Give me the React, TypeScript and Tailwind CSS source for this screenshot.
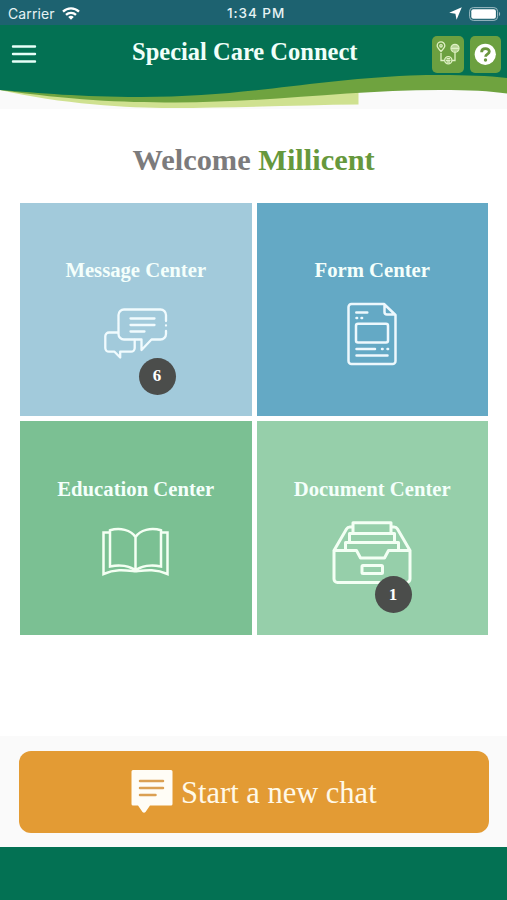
import type { ReactNode } from 'react';

function StatusBar() {
  return (
    <div className="relative flex h-[25px] items-center justify-between bg-[#1d6270] pl-2 pr-[6px] font-['Inter','Liberation_Sans',sans-serif] text-[14px] text-[#e6f2f4]">
      <div className="flex items-center gap-[7px] pt-[2px]">
        <span className="text-[14px] leading-none tracking-[0.1px]">Carrier</span>
        <svg width="18" height="13" viewBox="0 0 18 13" fill="none" stroke="#fff" strokeWidth="2.3">
          <path d="M1 4.6a11.5 11.5 0 0 1 16 0" />
          <path d="M4 7.8a7.2 7.2 0 0 1 10 0" />
          <path d="M6.2 10 9 12.8l2.8-2.8a4 4 0 0 0-5.6 0Z" fill="#fff" stroke="none" />
        </svg>
      </div>
      <span className="absolute left-[227px] top-[7px] text-[13.5px] font-medium leading-none tracking-[0.95px]">1:34 PM</span>
      <div className="flex items-center gap-[7px] pt-[2px]">
        <svg width="13" height="13" viewBox="0 0 12 12" fill="#fff">
          <path d="M11.8.2 7 11.8 5.900 6.300.2 5.200Z" />
        </svg>
        <svg width="32" height="14" viewBox="0 0 32 14" fill="none">
          <rect x=".6" y=".6" width="28" height="12.8" rx="3.7" stroke="#9dbbc3" strokeWidth="1" />
          <rect x="2.3" y="2.3" width="24.6" height="9.4" rx="2" fill="#fff" />
          <path d="M30 4.8v4.4c1.6-.7 1.6-3.7 0-4.4Z" fill="#9dbbc3" />
        </svg>
      </div>
    </div>
  );
}

function Header() {
  return (
    <header className="relative h-[85px]">
      <svg className="absolute inset-0" width="507" height="85" viewBox="0 25 507 85">
        <rect y="25" width="507" height="85" fill="#fff" />
        <path d="M0 90H507V109H0Z" fill="#fafafa" />
        <path d="M0 90C60 104 130 108 170 108C240 108 300 105 358.5 104.5V88H0Z" fill="#cfe190" />
        <path d="M0 88L0 90C70 100 120 102.5 175 102.5C275 102 350 90 440 90C470 90 490 91 507 93.5V60H0Z" fill="#6fa33f" />
        <path d="M0 25H507V78C480 75 445 74.5 410 75.5C310 80 245 97 140 97C80 97 40 93 0 90Z" fill="#037153" />
      </svg>
      <div className="relative flex h-[53px] items-center">
        <button className="ml-[11px] w-[26px] pt-[4px]" aria-label="Menu">
          <svg width="26" height="20" viewBox="0 0 26 20" stroke="#e6fff8" strokeWidth="2.4" strokeLinecap="round">
            <path d="M2 2.500h22M2 10h22M2 17.500h22" />
          </svg>
        </button>
        <h1 className="ml-[95px] whitespace-nowrap pt-[2px] text-[24.5px] font-bold leading-none text-[#f0fffa]">Special Care Connect</h1>
        <div className="ml-auto mr-[6px] flex gap-[6px] pt-[5px]">
          <button className="h-[37px] w-[32px] rounded-[5px] bg-[#6ca040]" aria-label="Journey">
            <svg width="32" height="37" viewBox="0 0 32 37" fill="none" stroke="#dff0c4" strokeWidth="1.3">
              <path d="M9 15.5C6.200 12.5 5.2 11.3 5.2 9.700a3.800 3.800 0 0 1 7.600 0c0 1.600-1 2.800-3.800 5.800Z" />
              <circle cx="9" cy="9.8" r="1.2" />
              <circle cx="23" cy="12.3" r="4" />
              <path d="M19 12.3h8M23 8.3v8M21 9v6.6M25 9v6.600M9 17v7.5h3.5M23 17v7.500h-3" />
              <circle cx="16.3" cy="24.3" r="3.6" />
              <path d="M14 24.3h4.6M14.5 22.7h3.6M14.5 26h3.6" />
            </svg>
          </button>
          <button className="h-[37px] w-[31px] rounded-[5px] bg-[#6ca040]" aria-label="Help">
            <svg width="31" height="37" viewBox="0 0 31 37" fill="none">
              <circle cx="15.3" cy="18.3" r="10.6" fill="#fff" />
              <path d="M11.6 16.2c0-4.900 7.700-4.600 7.700-.6 0 2.700-3.700 2.500-3.700 5.200" stroke="#6b963f" strokeWidth="2.8" />
              <circle cx="15.5" cy="24" r="1.7" fill="#6b963f" />
            </svg>
          </button>
        </div>
      </div>
    </header>
  );
}

function MessageIcon() {
  return (
    <svg width="64" height="52" viewBox="0 0 64 52" fill="none" stroke="#f1fbfe" strokeWidth="2.3" strokeLinejoin="round" strokeLinecap="round">
      <path d="M62 13V7a5.500 5.500 0 0 0-5.500-5.500H20A5.500 5.500 0 0 0 14.500 7v19A5.500 5.500 0 0 0 20 31.500h17.500V42l10-10.500h9a5.500 5.500 0 0 0 5.500-5.500v-3M62 17.500v.1" />
      <path d="M14 24.500H5A3.700 3.700 0 0 0 1.300 28v12A3.700 3.700 0 0 0 5 43.700h5.500l5.700 5.800v-5.800H27a3.700 3.700 0 0 0 3.700-3.700v-8" />
      <path d="M26.500 10.500h24M26.500 17h24M26.500 23.500h14" />
    </svg>
  );
}

function FormIcon() {
  return (
    <svg width="50" height="64" viewBox="0 0 50 64" fill="none" stroke="#edf8fd" strokeWidth="2.5" strokeLinejoin="round" strokeLinecap="round">
      <path d="M37 2H4.500A3 3 0 0 0 1.500 5v54a3 3 0 0 0 3 3H45.500a3 3 0 0 0 3-3V13L37 2ZM37.500 3v7a2.500 2.500 0 0 0 2.500 2.500h8" />
      <path d="M9.300 10.500h11M9.500 16h.6M14.500 16h.6M9.500 47h18.500M35 47h.6M40.500 47h.6M9.500 53.500h31" />
      <rect x="9" y="21.8" width="32" height="18.8" rx="2" />
    </svg>
  );
}

function BookIcon() {
  return (
    <svg width="67" height="49" viewBox="0 0 67 49" fill="none" stroke="#f4fff3" strokeWidth="2.5">
      <path d="M33.500 10C29 3 18 .2 8 3.300V39.500C18 37.500 28 39 33.500 43.500C39 39 49 37.500 59 39.500V3.300C49 .2 38 3 33.500 10ZV43.500" />
      <path d="M8 5.500H1.500V47C14 41.500 24 43.300 33.500 44.300C43 43.300 53 41.500 65.500 47V5.500H59" />
    </svg>
  );
}

function DocumentIcon() {
  return (
    <svg width="80" height="65" viewBox="0 0 80 65" fill="none" stroke="#f3fff4" strokeWidth="3" strokeLinejoin="round" strokeLinecap="round">
      <path d="M2 30.500H24.500L28.500 38H52.500L56.500 30.500H78V59A3.500 3.500 0 0 1 74.500 62.500H5.500A3.500 3.500 0 0 1 2 59ZM2 30.500 14.500 9A4 4 0 0 1 18 7h2.500M78 30.500 65.500 9A4 4 0 0 0 62 7h-2.500" />
      <path d="M21 13V2.800H59V13M17.500 22V13.500H62.500V22M13.500 29.500V22.500H66.500V29.500" />
      <rect x="30" y="45.500" width="20.5" height="8" rx="1" />
    </svg>
  );
}

function Tile({ title, color, children, badge, badgeClass = '' }: {
  title: string; color: string; children: ReactNode; badge?: number; badgeClass?: string;
}) {
  return (
    <button className={`relative flex flex-col items-center ${color}`}>
      <span className="whitespace-nowrap text-[20.7px] font-bold leading-[24px] text-[#f4fffb]">{title}</span>
      {children}
      {badge && (
        <span className={`absolute flex size-[37px] items-center justify-center rounded-full bg-[#4b4d4b] text-[17px] font-bold text-white ${badgeClass}`}>{badge}</span>
      )}
    </button>
  );
}

export default function App() {
  return (
    <div className="flex h-[900px] w-[507px] flex-col overflow-hidden bg-white font-['Liberation_Serif',serif]">
      <StatusBar />
      <Header />
      <main className="flex-1 px-[20px]">
        <h2 className="ml-[112.5px] mt-[33px] whitespace-nowrap text-[30.4px] font-bold leading-[34px] text-[#7c7b7c]">
          Welcome <span className="text-[#66983c]">Millicent</span>
        </h2>
        <div className="mt-[25.5px] grid w-[468px] grid-cols-[231.5px_231.5px] grid-rows-[213.5px_213.5px] gap-[5px]">
          <Tile title="Message Center" color="bg-[#a2cadb] pt-[55px]" badge={6} badgeClass="left-[118.5px] top-[155px]">
            <div className="mt-[26px]"><MessageIcon /></div>
          </Tile>
          <Tile title="Form Center" color="bg-[#64a9c5] pt-[55px]">
            <div className="mt-[20px]"><FormIcon /></div>
          </Tile>
          <Tile title="Education Center" color="bg-[#7bc093] pt-[56px]">
            <div className="mt-[26px]"><BookIcon /></div>
          </Tile>
          <Tile title="Document Center" color="bg-[#96cfaa] pt-[56px]" badge={1} badgeClass="left-[118px] top-[155px]">
            <div className="mt-[19px]"><DocumentIcon /></div>
          </Tile>
        </div>
      </main>
      <div className="h-[111px] bg-[#fafafa] pl-[19px] pt-[15px]">
        <button className="flex h-[82px] w-[470px] items-center rounded-[12px] bg-[#e39b34] pl-[112px] text-[30.5px] text-[#fff9e8]">
          <svg className="-mt-[3px]" width="42" height="44" viewBox="0 0 42 44">
            <path d="M2 1h38a1.500 1.500 0 0 1 1.500 1.500V35a1.500 1.500 0 0 1-1.500 1.500H19L14.500 43q-1.500 1.500-3 0L7 36.500H2A1.500 1.500 0 0 1 .5 35V2.500A1.500 1.500 0 0 1 2 1Z" fill="#fffdf6" />
            <path d="M9 12h23M9 19h23M9 26h15.500" stroke="#dba052" strokeWidth="2.5" strokeLinecap="round" />
          </svg>
          <span className="ml-[8px] whitespace-nowrap pt-[3px]">Start a new chat</span>
        </button>
      </div>
      <footer className="h-[53px] bg-[#037153]" />
    </div>
  );
}
